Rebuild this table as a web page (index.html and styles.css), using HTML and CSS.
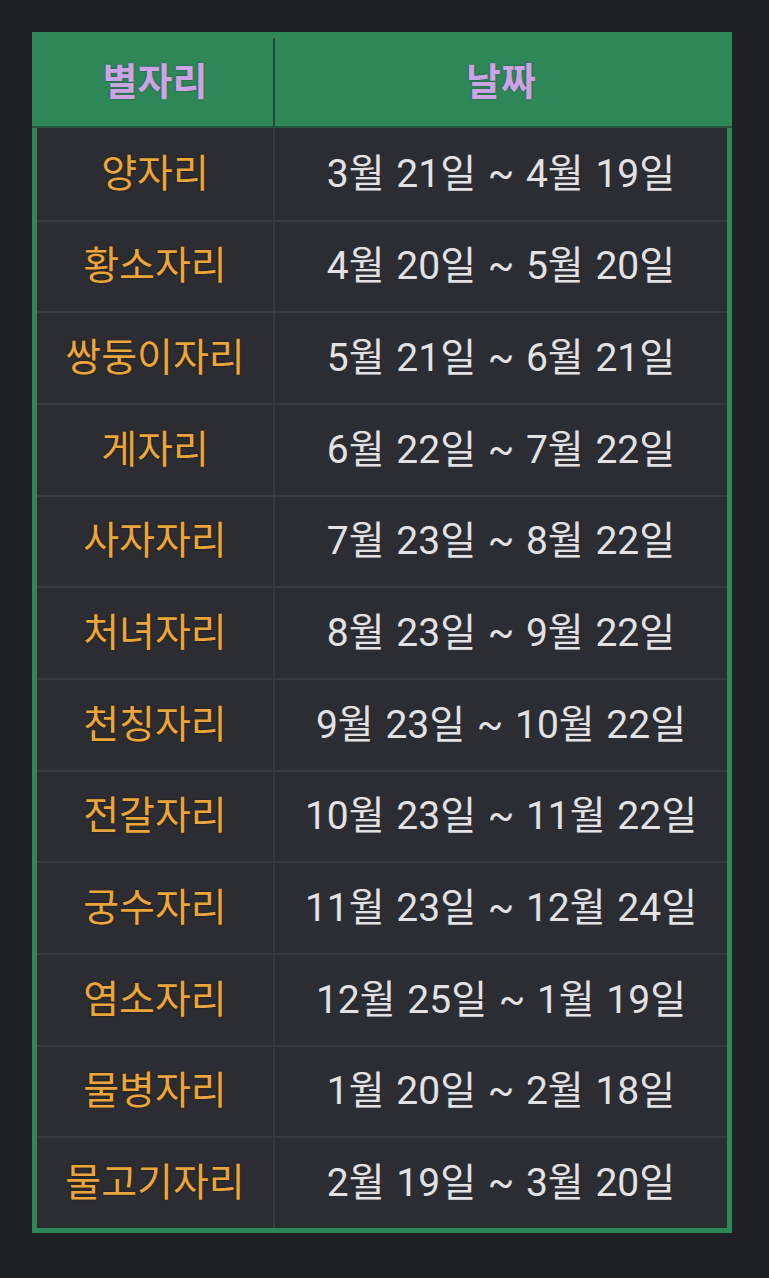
FILE: index.html
```html
<!DOCTYPE html>
<html lang="ko">
<head>
<meta charset="utf-8"/>
<meta content="width=device-width, initial-scale=1.0" name="viewport"/>
<title>별자리 날짜</title>
<link rel="stylesheet" href="styles.css">
</head>
<body>
<div class="zodiac">
  <div class="row head">
    <div class="cell">별자리</div>
    <div class="cell">날짜</div>
  </div>
  <div class="row"><div class="cell name">양자리</div><div class="cell date">3월 21일 ~ 4월 19일</div></div>
  <div class="row"><div class="cell name">황소자리</div><div class="cell date">4월 20일 ~ 5월 20일</div></div>
  <div class="row"><div class="cell name">쌍둥이자리</div><div class="cell date">5월 21일 ~ 6월 21일</div></div>
  <div class="row"><div class="cell name">게자리</div><div class="cell date">6월 22일 ~ 7월 22일</div></div>
  <div class="row"><div class="cell name">사자자리</div><div class="cell date">7월 23일 ~ 8월 22일</div></div>
  <div class="row"><div class="cell name">처녀자리</div><div class="cell date">8월 23일 ~ 9월 22일</div></div>
  <div class="row"><div class="cell name">천칭자리</div><div class="cell date">9월 23일 ~ 10월 22일</div></div>
  <div class="row"><div class="cell name">전갈자리</div><div class="cell date">10월 23일 ~ 11월 22일</div></div>
  <div class="row"><div class="cell name">궁수자리</div><div class="cell date">11월 23일 ~ 12월 24일</div></div>
  <div class="row"><div class="cell name">염소자리</div><div class="cell date">12월 25일 ~ 1월 19일</div></div>
  <div class="row"><div class="cell name">물병자리</div><div class="cell date">1월 20일 ~ 2월 18일</div></div>
  <div class="row"><div class="cell name">물고기자리</div><div class="cell date">2월 19일 ~ 3월 20일</div></div>
</div>
</body>
</html>
```

FILE: styles.css
```css
body {
  margin: 0;
  padding: 32px;
  background: #1f2023;
  font-family: Roboto, "Noto Sans CJK KR", sans-serif;
}
.zodiac {
  width: 690px;
  border: 5px solid #2e8756;
  border-top: 0;
  background: #2c2d32;
}
.row {
  display: grid;
  grid-template-columns: 238px 1fr;
  height: 91.67px;
  border-top: 2px solid #393a3f;
  box-sizing: border-box;
}
.cell {
  display: flex;
  align-items: center;
  justify-content: center;
  font-size: 39px;
  padding-bottom: 8px;
}
.row .cell:first-child {
  border-right: 2px solid #393a3f;
}
.row.head {
  height: 96px;
  border-top: 0;
  background: #2e8756;
  border-bottom: 2px solid #24553a;
  margin: 0 -5px;
  padding: 5px 5px 0;
}
.row.head .cell {
  color: #cca3e4;
  font-weight: bold;
  font-size: 38px;
  padding-bottom: 7px;
  text-shadow: 0 0 2px rgba(40, 20, 60, 0.5);
}
.row.head .cell:first-child {
  border-right: 2px solid #22493a;
  margin-top: 1px;
}
.row.head + .row {
  border-top: 0;
}
.name {
  color: #eaa63d;
  text-shadow: 0 0 2px rgba(40, 20, 0, 0.9);
}
.date {
  color: #e2e2e4;
  word-spacing: 2px;
}
```
